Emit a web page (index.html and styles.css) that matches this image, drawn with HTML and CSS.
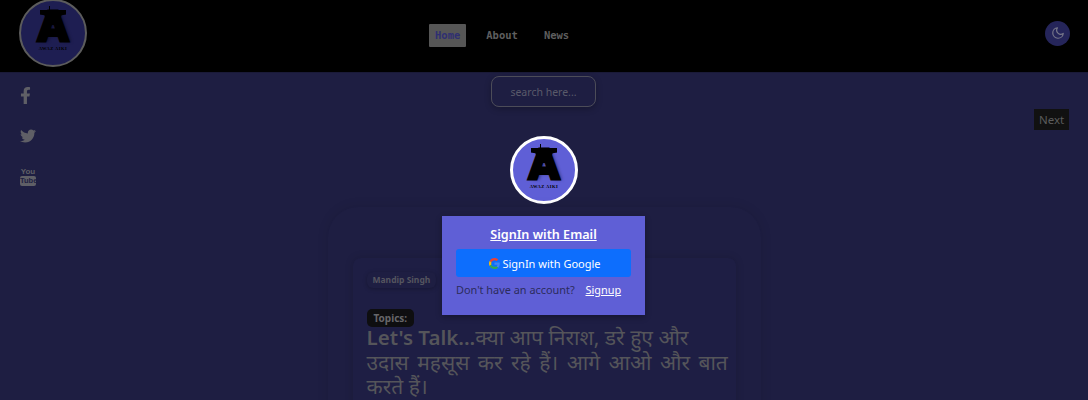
FILE: index.html
```html
<!DOCTYPE html>
<html>
<head>
    <title>Awaz Aiki</title>
    <link rel="stylesheet" href="styles.css">
</head>
<body>
    <div class="page">
        <header class="navbar">
            <div class="logo logo-small">
                <span class="logo-letter">A</span>
                <span class="logo-name">AWAZ AIKI</span>
            </div>
            <nav class="nav-links">
                <a class="nav-link active">Home</a>
                <a class="nav-link">About</a>
                <a class="nav-link">News</a>
            </nav>
            <button class="theme-btn">
                <svg viewBox="0 0 24 24" width="14" height="14" fill="none" stroke="#77778a" stroke-width="2" stroke-linecap="round" stroke-linejoin="round"><path d="M21 12.790A9 9 0 1 1 11.210 3 7 7 0 0 0 21 12.790z"/></svg>
            </button>
        </header>

        <div class="social">
            <svg class="social-f" viewBox="0 0 320 512" fill="#5f5f66"><path d="M279.14 288l14.22-92.66h-88.91v-60.13c0-25.35 12.42-50.06 52.24-50.06h40.42V6.26S260.43 0 225.36 0c-73.22 0-121.08 44.38-121.08 124.72v70.62H22.89V288h81.39v224h100.17V288z"/></svg>
            <svg class="social-t" viewBox="0 0 512 512" fill="#5f5f66"><path d="M459.37 151.716c.325 4.548.325 9.097.325 13.645 0 138.72-105.583 298.558-298.558 298.558-59.452 0-114.68-17.219-161.137-47.106 8.447.974 16.568 1.299 25.34 1.299 49.055 0 94.213-16.568 130.274-44.832-46.132-.975-84.792-31.188-98.112-72.772 6.498.974 12.995 1.624 19.818 1.624 9.421 0 18.843-1.3 27.614-3.573-48.081-9.747-84.143-51.98-84.143-102.985v-1.299c13.969 7.797 30.214 12.67 47.431 13.319-28.264-18.843-46.781-51.005-46.781-87.391 0-19.492 5.197-37.36 14.294-52.954 51.655 63.675 129.3 105.258 216.365 109.807-1.624-7.797-2.599-15.918-2.599-24.04 0-57.828 46.782-104.934 104.934-104.934 30.213 0 57.502 12.67 76.67 33.137 23.715-4.548 46.456-13.32 66.599-25.34-7.798 24.366-24.366 44.833-46.132 57.827 21.117-2.273 41.584-8.122 60.426-16.243-14.292 20.791-32.161 39.308-52.628 54.253z"/></svg>
            <div class="social-y">
                <span class="yt-you">You</span>
                <span class="yt-tube">Tube</span>
            </div>
        </div>

        <a class="next-btn">Next</a>

        <main class="content">
            <input class="search" type="text" placeholder="search here...">
            <div class="logo logo-big">
                <span class="logo-letter">A</span>
                <span class="logo-name">AWAZ AIKI</span>
            </div>
            <section class="card">
                <div class="post">
                    <span class="author">Mandip Singh</span>
                    <span class="topics">Topics:</span>
                    <h2 class="title"><b>Let's Talk...</b>क्या आप निराश, डरे हुए और <span class="title-wide">उदास महसूस कर रहे हैं। आगे आओ और बात</span> करते हैं।</h2>
                </div>
            </section>
        </main>

        <div class="signin">
            <a class="signin-title">SignIn with Email</a>
            <button class="google-btn">
                <svg viewBox="0 0 48 48" width="11" height="11"><path fill="#EA4335" d="M24 9.500c3.540 0 6.710 1.220 9.210 3.600l6.850-6.850C35.900 2.380 30.470 0 24 0 14.620 0 6.510 5.380 2.560 13.220l7.980 6.190C12.430 13.720 17.740 9.500 24 9.500z"/><path fill="#4285F4" d="M46.980 24.550c0-1.570-.15-3.090-.38-4.550H24v9.020h12.940c-.58 2.960-2.260 5.480-4.780 7.180l7.730 6c4.510-4.180 7.090-10.360 7.090-17.650z"/><path fill="#FBBC05" d="M10.530 28.590c-.48-1.450-.76-2.990-.76-4.590s.27-3.140.76-4.590l-7.980-6.190C.92 16.460 0 20.120 0 24c0 3.880.92 7.540 2.560 10.780l7.970-6.190z"/><path fill="#34A853" d="M24 48c6.480 0 11.930-2.130 15.890-5.810l-7.730-6c-2.150 1.450-4.920 2.300-8.160 2.300-6.260 0-11.570-4.220-13.470-9.910l-7.980 6.190C6.510 42.620 14.620 48 24 48z"/></svg>
                SignIn with Google
            </button>
            <p class="signin-foot">Don't have an account? <a class="signup">Signup</a></p>
        </div>
    </div>
</body>
</html>
```

FILE: styles.css
```css
* {
    box-sizing: border-box;
}

body {
    margin: 0;
    font-family: "Noto Sans", "Open Sans", sans-serif;
    background-color: #1e1e42;
}

.page {
    position: relative;
    height: 400px;
    overflow: hidden;
}

/* Navbar */
.navbar {
    display: flex;
    align-items: center;
    height: 73px;
    padding: 0 18px 0 19px;
    background-color: #000;
    border-bottom: 1px solid #1a1a38;
}

.logo {
    display: flex;
    flex-direction: column;
    align-items: center;
    flex: none;
    width: 68px;
    height: 68px;
    border-radius: 50%;
    overflow: hidden;
    color: #000;
}

.logo-letter {
    position: relative;
    margin-top: 9px;
    font-family: "DejaVu Sans", sans-serif;
    font-weight: bold;
    font-size: 40px;
    line-height: 35px;
    -webkit-text-stroke: 3px #000;
    text-shadow: 3px 1px 3px rgba(0, 0, 0, .35);
}

/* flat top and spike of the logo letter */
.logo-letter::before {
    content: "";
    position: absolute;
    left: 2px;
    right: 2px;
    top: 0;
    height: 15px;
    background-color: #000;
    clip-path: polygon(0 0, 100% 0, 100% 30%, 82% 35%, 68% 100%, 32% 100%, 18% 35%, 0 30%);
}

.logo-letter::after {
    content: "";
    position: absolute;
    left: 11px;
    top: -4px;
    width: 1px;
    height: 5px;
    background-color: #000;
}

.logo-name {
    margin-top: 1px;
    font-family: "Liberation Serif", serif;
    font-weight: bold;
    font-size: 4.500px;
    letter-spacing: .5px;
    line-height: 6px;
}

.logo-small {
    margin-top: -6px;
    background-color: #1e1e52;
    border: 2px solid #5c5c5c;
}

.logo-big {
    background-color: #5f5fd6;
    border: 3px solid #fff;
}

.nav-links {
    display: flex;
    align-items: center;
    gap: 14px;
    margin-left: 342px;
    margin-bottom: 2px;
}

.nav-link {
    padding: 5px 6px;
    border-radius: 1px;
    font-family: "DejaVu Sans Mono", monospace;
    font-weight: bold;
    font-size: 10.500px;
    line-height: 13px;
    color: #5e5e5e;
}

.nav-link.active {
    background-color: #565656;
    color: #2f2f72;
}

.theme-btn {
    display: flex;
    align-items: center;
    justify-content: center;
    width: 25px;
    height: 25px;
    padding: 0;
    margin-left: auto;
    margin-bottom: 6px;
    border: none;
    border-radius: 50%;
    background-color: #25255a;
}

/* Side icons */
.social {
    position: absolute;
    left: 20px;
    top: 87px;
    display: flex;
    flex-direction: column;
    align-items: flex-start;
    width: 16px;
}

.social-f {
    width: 11px;
    height: 17px;
}

.social-t {
    width: 16px;
    height: 16px;
    margin-top: 24px;
}

.social-y {
    display: flex;
    flex-direction: column;
    align-items: center;
    width: 16px;
    margin-top: 24px;
    font-family: "Liberation Sans Narrow", "Liberation Sans", sans-serif;
    font-weight: bold;
    font-size: 8px;
    line-height: 8px;
    color: #5f5f66;
}

.yt-tube {
    width: 16px;
    height: 10px;
    border-radius: 2px;
    background-color: #5f5f66;
    color: #1e1e42;
    text-align: center;
    font-size: 7.500px;
    line-height: 10px;
}

.next-btn {
    position: absolute;
    left: 1034px;
    top: 109px;
    padding: 3px 5px;
    background-color: #111;
    color: #5c5c5c;
    font-size: 11.500px;
    line-height: 15px;
}

/* Main column */
.content {
    display: flex;
    flex-direction: column;
    align-items: center;
    padding-top: 3px;
}

.search {
    width: 105px;
    height: 31px;
    margin-right: 1px;
    padding: 0 6px;
    border: 1px solid #4c4c58;
    border-radius: 8px;
    background: transparent;
    box-shadow: 0 2px 6px rgba(0, 0, 0, .25);
    text-align: center;
    font-family: inherit;
    font-size: 10.500px;
}

.search::placeholder {
    color: #5a5a6a;
}

.logo-big {
    margin-top: 29px;
}

.card {
    width: 433px;
    height: 300px;
    margin-top: 3px;
    padding: 51px 25px 0;
    border-radius: 30px;
    background-color: #1e1e42;
    box-shadow: 0 0 12px rgba(0, 0, 0, .1);
}

.post {
    display: flex;
    flex-direction: column;
    align-items: flex-start;
    height: 200px;
    padding: 14px 10px 13px 14px;
    border-radius: 8px;
    background-color: #1e1e44;
    box-shadow: 0 0 8px rgba(0, 0, 0, .15);
}

.author {
    padding: 1px 6px;
    border-radius: 6px;
    background-color: #1e1e42;
    box-shadow: 0 1px 4px rgba(0, 0, 0, .25);
    color: #55555f;
    font-weight: bold;
    font-size: 8.500px;
    line-height: 14px;
}

.topics {
    margin-top: 21px;
    padding: 1px 7px;
    border-radius: 5px;
    background-color: #0e0e10;
    color: #66666a;
    font-weight: bold;
    font-size: 10px;
    line-height: 16px;
}

.title {
    margin: -2px 0 0;
    font-weight: normal;
    font-size: 21px;
    line-height: 24.500px;
    color: #55555a;
}

.title b {
    font-size: 20.500px;
    font-weight: 600;
}

.title-wide {
    display: block;
    white-space: nowrap;
    word-spacing: 3px;
}

/* Sign in box */
.signin {
    position: absolute;
    left: 442px;
    top: 216px;
    display: flex;
    flex-direction: column;
    align-items: center;
    width: 203px;
    height: 99px;
    padding: 10px 14px 0;
    background-color: #5f5fd6;
    box-shadow: 0 2px 6px rgba(0, 0, 0, .3);
    color: #fff;
}

.signin-title {
    font-weight: 600;
    font-size: 12.600px;
    line-height: 18px;
    text-decoration: underline;
}

.google-btn {
    display: flex;
    align-items: center;
    justify-content: center;
    gap: 2px;
    width: 175px;
    height: 28px;
    margin-top: 5px;
    padding: 0 0 0 3px;
    border: none;
    border-radius: 3px;
    background-color: #0d6efd;
    color: #fff;
    font-family: inherit;
    font-size: 11px;
}

.signin-foot {
    align-self: flex-start;
    margin: 5px 0 0;
    color: #2c2c5c;
    font-size: 10.900px;
    line-height: 16px;
}

.signup {
    margin-left: 8px;
    color: #fff;
    text-decoration: underline;
}
```
